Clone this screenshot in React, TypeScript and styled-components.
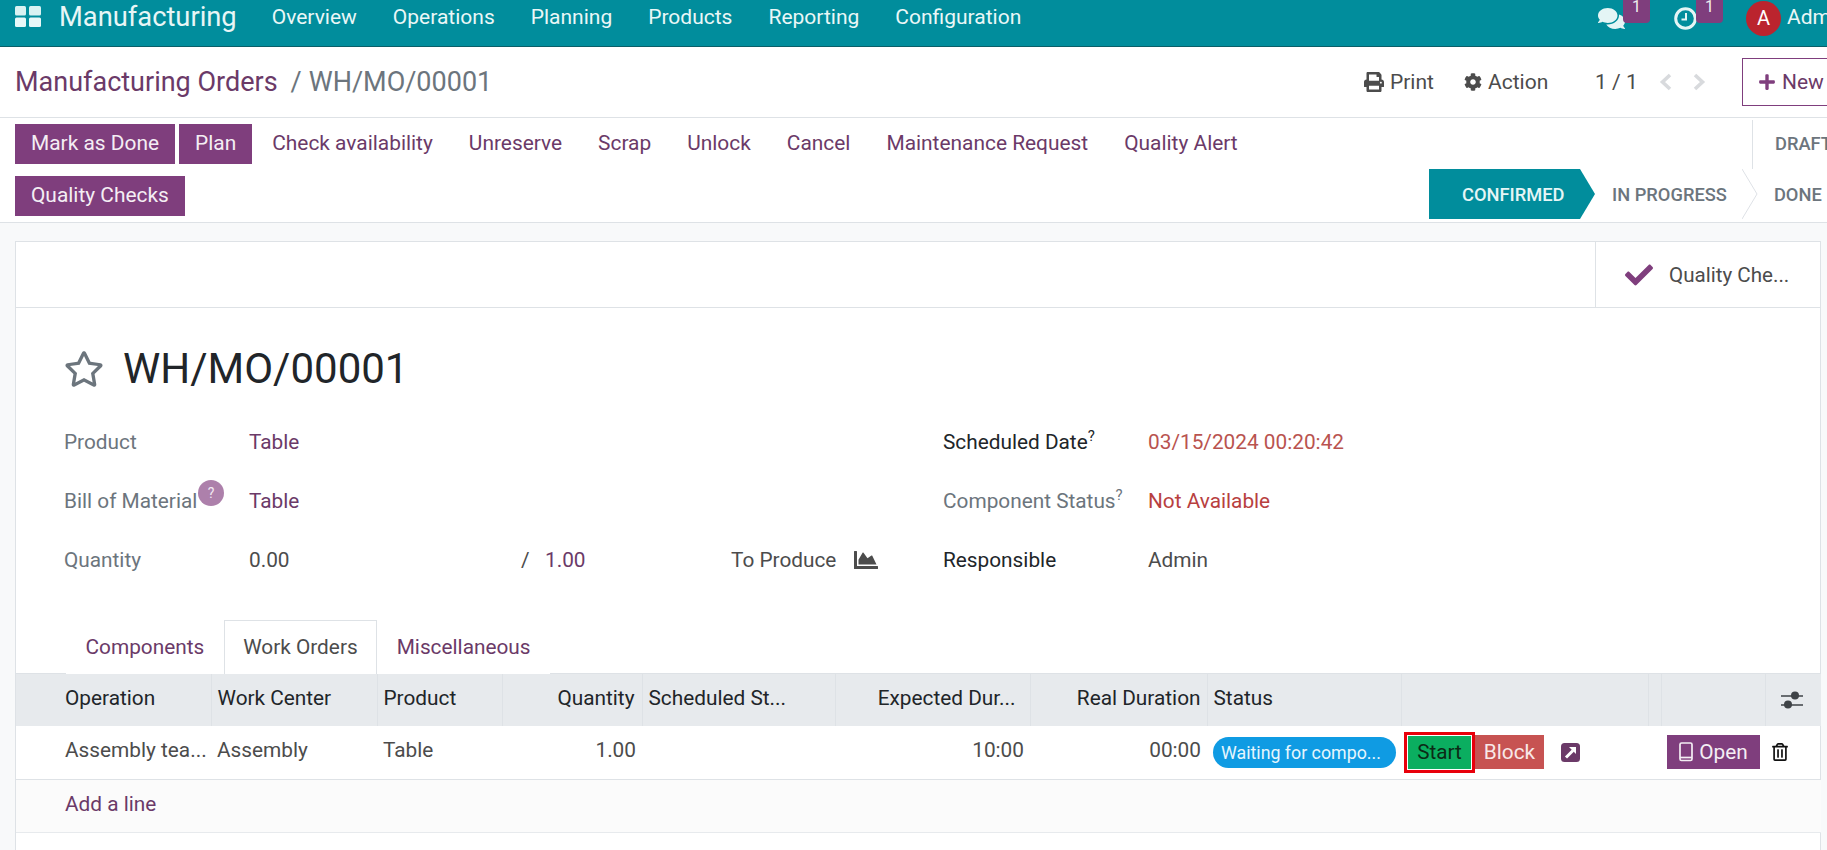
import React from "react";
import styled, { createGlobalStyle } from "styled-components";
import { FaComments, FaPrint, FaCog, FaPlus, FaCheck, FaRegStar, FaChartArea, FaRegTrashAlt } from "react-icons/fa";

const PURPLE = "#7f3e7d";
const LINK = "#6b3a68";
const TEAL = "#018d9c";
const BASE = "20.8px";

const Global = createGlobalStyle`
  html, body { margin: 0; padding: 0; height: 850px; overflow: hidden; background: #f8f9fa; }
  body { font-family: Roboto, "Liberation Sans", sans-serif; font-size: ${BASE}; color: #4c4c4c; }
  * { box-sizing: border-box; }
`;

const Page = styled.div`
  width: 1827px;
  height: 850px;
  overflow: hidden;
  display: flex;
  flex-direction: column;
`;

const Navbar = styled.header`
  height: 47px;
  flex: none;
  width: 1900px;
  background: ${TEAL};
  border-bottom: 1px solid #0a5f68;
  display: flex;
  align-items: center;
  color: #fff;
  padding-left: 15px;
`;
const AppGrid = styled.svg`
  width: 26px;
  height: 21px;
  margin: 0 18px 13px 0;
`;
const Brand = styled.span`
  font-size: 27.3px;
  color: #e8f6f6;
  margin-bottom: 12px;
  margin-right: 35px;
`;
const NavItem = styled.span`
  font-size: 21px;
  color: #eaf7f7;
  margin-right: 36px;
  margin-bottom: 12px;
`;
const NavRight = styled.div`
  margin-left: auto;
  display: flex;
  align-items: center;
  height: 100%;
  width: 302px;
`;
const IconSlot = styled.span<{ $w: number }>`
  position: relative;
  display: flex;
  align-items: center;
  width: ${(p) => p.$w}px;
  height: 100%;
  color: #e4f5f5;
  padding-bottom: 10px;
`;
const Badge = styled.span<{ $left: number }>`
  position: absolute;
  top: -4px;
  left: ${(p) => p.$left}px;
  width: 27px;
  height: 27px;
  border-radius: 4px;
  background: ${PURPLE};
  color: #eee;
  font-size: 16px;
  text-align: center;
  line-height: 21px;
`;
const ClockIcon = styled.svg`
  width: 23px;
  height: 23px;
`;
const Avatar = styled.span`
  width: 35px;
  height: 35px;
  border-radius: 50%;
  background: #bb242e;
  color: #fff;
  font-size: 20px;
  display: flex;
  align-items: center;
  justify-content: center;
  margin-right: 6px;
  margin-bottom: 10px;
`;
const UserName = styled.span`
  font-size: 21px;
  color: #eaf7f7;
  margin-bottom: 12px;
`;

const CrumbBar = styled.div`
  flex: none;
  height: 71px;
  width: 1900px;
  background: #fff;
  border-bottom: 1px solid #dee2e6;
  display: flex;
  align-items: center;
  padding: 0 38px 0 15px;
`;
const Crumb = styled.span`
  font-size: 27px;
  color: ${LINK};
`;
const CrumbSep = styled.span`
  font-size: 27px;
  color: #6c757d;
  margin: 0 7px 0 13px;
`;
const CrumbCurrent = styled.span`
  font-size: 27px;
  color: #6c757d;
`;
const CrumbActions = styled.div`
  margin-left: auto;
  display: flex;
  align-items: center;
  font-size: 21px;
  color: #4c4c4c;
`;
const ActionItem = styled.span<{ $w: number }>`
  display: flex;
  align-items: center;
  gap: 6px;
  width: ${(p) => p.$w}px;
`;
const Pager = styled.span`
  width: 64px;
  white-space: nowrap;
`;
const PagerArrow = styled.svg<{ $w: number }>`
  width: 13px;
  height: 18px;
  margin-right: ${(p) => p.$w - 13}px;
  flex: none;
`;
const NewButton = styled.span`
  display: flex;
  align-items: center;
  gap: 6px;
  height: 48px;
  width: 120px;
  padding-left: 15px;
  border: 1px solid ${PURPLE};
  color: ${LINK};
  svg { color: ${PURPLE}; }
`;

const ControlBar = styled.div`
  flex: none;
  height: 105px;
  background: #fff;
  border-bottom: 1px solid #dee2e6;
  display: flex;
  justify-content: space-between;
  overflow: hidden;
`;
const Buttons = styled.div`
  padding: 6px 0 0 15px;
  display: flex;
  flex-direction: column;
  gap: 12px;
`;
const ButtonRow = styled.div`
  display: flex;
  gap: 4px;
`;
const ActionButton = styled.span<{ $primary?: boolean }>`
  height: 40px;
  padding: 0 16px 2px;
  display: flex;
  align-items: center;
  font-size: 20.9px;
  white-space: nowrap;
  background: ${(p) => (p.$primary ? PURPLE : "transparent")};
  color: ${(p) => (p.$primary ? "#f4eef4" : LINK)};
`;
const StatusBar = styled.div`
  width: 398px;
  flex: none;
  display: flex;
  flex-direction: column;
  font-size: 18.3px;
  font-weight: 500;
  color: #6c757d;
`;
const DraftRow = styled.div`
  margin: 2px 0 0 323px;
  height: 49px;
  border-left: 1px solid #dee2e6;
  padding: 13px 0 0 22px;
  white-space: nowrap;
`;
const Steps = styled.div`
  display: flex;
  height: 50px;
  align-items: center;
`;
const CurrentStep = styled.span`
  background: ${TEAL};
  color: #e6f6f6;
  width: 151px;
  height: 50px;
  padding-left: 33px;
  display: flex;
  align-items: center;
`;
const Arrow = styled.svg<{ $ml?: number }>`
  width: 16px;
  height: 50px;
  flex: none;
  margin-left: ${(p) => p.$ml ?? 0}px;
`;
const Step = styled.span<{ $ml: number }>`
  margin-left: ${(p) => p.$ml}px;
  white-space: nowrap;
`;

const Sheet = styled.main`
  margin: 18px 6px 0 15px;
  flex: 1;
  background: #fff;
  border: 1px solid #dee2e6;
  border-bottom: none;
`;
const ButtonBox = styled.div`
  height: 66px;
  border-bottom: 1px solid #dee2e6;
  display: flex;
  justify-content: flex-end;
`;
const StatButton = styled.div`
  width: 225px;
  border-left: 1px solid #dee2e6;
  display: flex;
  align-items: center;
  padding-left: 29px;
  gap: 16px;
  font-size: 20.6px;
  color: #4c4c4c;
  svg { color: ${PURPLE}; }
`;
const TitleRow = styled.div`
  display: flex;
  align-items: center;
  height: 65px;
  margin: 28px 0 0 48px;
  gap: 19px;
  color: #6c757d;
`;
const Title = styled.h1`
  margin: 0;
  font-size: 42px;
  font-weight: 400;
  color: #212529;
`;
const Form = styled.div`
  margin: 11px 0 0 48px;
  display: grid;
  grid-template-columns: 879px 1fr;
`;
const FormColumn = styled.div`
  display: flex;
  flex-direction: column;
`;
const FormRow = styled.div`
  height: 59px;
  display: flex;
  align-items: center;
`;
const Label = styled.span<{ $w: number; $dark?: boolean }>`
  width: ${(p) => p.$w}px;
  flex: none;
  color: ${(p) => (p.$dark ? "#212529" : "#6c757d")};
  position: relative;
`;
const Sup = styled.sup`
  font-size: 15px;
  line-height: 0;
`;
const Help = styled.span`
  position: absolute;
  left: 134px;
  top: -9px;
  width: 26px;
  height: 26px;
  border-radius: 50%;
  background: #ad80ab;
  color: #f3e9f3;
  font-size: 14px;
  display: flex;
  align-items: center;
  justify-content: center;
`;
const Value = styled.span<{ $color?: string; $w?: number }>`
  color: ${(p) => p.$color ?? "#4c4c4c"};
  ${(p) => (p.$w ? `width: ${p.$w}px;` : "")}
`;
const Unit = styled.span`
  color: #4c4c4c;
  width: 147px;
  display: flex;
  justify-content: space-between;
  align-items: center;
`;

const Tabs = styled.div`
  margin-top: 31px;
  padding-left: 50px;
  display: flex;
  height: 54px;
  border-bottom: 1px solid #dee2e6;
`;
const Tab = styled.span<{ $active?: boolean }>`
  height: 54px;
  padding: 0 18.5px 2px;
  display: flex;
  align-items: center;
  color: ${(p) => (p.$active ? "#4c4c4c" : LINK)};
  background: #fff;
  border: 1px solid ${(p) => (p.$active ? "#dee2e6" : "transparent")};
  border-bottom: none;
`;
const Table = styled.table`
  width: 1805px;
  table-layout: fixed;
  border-collapse: collapse;
`;
const Th = styled.th<{ $right?: boolean; $pr?: number }>`
  height: 52px;
  background: #e7eaed;
  font-weight: 400;
  font-size: ${BASE};
  color: #212529;
  padding: 0 ${(p) => p.$pr ?? 6}px 4px 6px;
  text-align: ${(p) => (p.$right ? "right" : "left")};
  border-left: 1px solid #dee2e6;
  white-space: nowrap;
  overflow: hidden;
  &:first-child { border-left: none; padding-left: 49px; }
`;
const Td = styled.td<{ $right?: boolean }>`
  height: 53px;
  color: #4c4c4c;
  padding: 0 6px 4px;
  text-align: ${(p) => (p.$right ? "right" : "left")};
  border-bottom: 1px solid #dee2e6;
  white-space: nowrap;
  &:first-child { padding-left: 49px; }
`;
const ActionCell = styled(Td)`
  padding-bottom: 0;
`;
const AddRow = styled.td`
  height: 53px;
  background: #fbfbfb;
  border-bottom: 1px solid #e7eaed;
  padding: 0 0 3px 49px;
  color: ${LINK};
`;
const Pill = styled.span`
  display: block;
  width: 183px;
  height: 31px;
  line-height: 31px;
  border-radius: 16px;
  background: #0f9be3;
  color: #e6f6fd;
  font-size: 17.8px;
  padding-left: 8px;
`;
const RowActions = styled.div`
  display: flex;
  align-items: center;
  margin-left: -3px;
`;
const Start = styled.span`
  width: 71px;
  height: 41px;
  border: 3px solid #e8000b;
  padding: 1px;
  background: #fff;
  display: flex;
  z-index: 1;
  span {
    flex: 1;
    background: #0bae60;
    color: #0c2a16;
    font-size: 20.7px;
    display: flex;
    align-items: center;
    justify-content: center;
  }
`;
const Block = styled.span`
  width: 69px;
  height: 34px;
  background: #c75352;
  color: #f8e8e8;
  display: flex;
  align-items: center;
  justify-content: center;
`;
const LinkIcon = styled.svg`
  width: 19px;
  height: 19px;
  margin-left: 17px;
`;
const OpenButton = styled.span`
  width: 93px;
  height: 34px;
  background: ${PURPLE};
  color: #f4eef4;
  display: flex;
  align-items: center;
  justify-content: center;
  gap: 6px;
`;
const SliderIcon = styled.svg`
  width: 22px;
  height: 18px;
  display: block;
  margin: 4px 0 0 9px;
`;
const Trash = styled.span`
  display: flex;
  color: #111;
`;

const cols = [195, 166, 125, 140, 193, 195, 177, 194, 247, 13, 104, 56];

export default function App() {
  return (
    <Page>
      <Global />
      <Navbar>
        <AppGrid viewBox="0 0 26 21">
          <rect x="0" y="0" width="11" height="9.5" rx="1.5" fill="#d9f2f2" />
          <rect x="14" y="0" width="12" height="9.5" rx="1.5" fill="#d9f2f2" />
          <rect x="0" y="11.5" width="11" height="9.5" rx="1.5" fill="#e8f8f8" />
          <rect x="14" y="11.5" width="12" height="9.5" rx="1.5" fill="#e8f8f8" />
        </AppGrid>
        <Brand>Manufacturing</Brand>
        {["Overview", "Operations", "Planning", "Products", "Reporting", "Configuration"].map((n) => (
          <NavItem key={n}>{n}</NavItem>
        ))}
        <NavRight>
          <IconSlot $w={76}>
            <FaComments size={27} />
            <Badge $left={25}>1</Badge>
          </IconSlot>
          <IconSlot $w={72}>
            <ClockIcon viewBox="0 0 23 23">
              <circle cx="11.5" cy="11.5" r="9.8" fill="none" stroke="#e4f5f5" strokeWidth="3" />
              <path d="M12 6v6.4H7.5" fill="none" stroke="#e4f5f5" strokeWidth="2" />
            </ClockIcon>
            <Badge $left={22}>1</Badge>
          </IconSlot>
          <Avatar>A</Avatar>
          <UserName>Admin</UserName>
        </NavRight>
      </Navbar>

      <CrumbBar>
        <Crumb>Manufacturing Orders</Crumb>
        <CrumbSep>/</CrumbSep>
        <CrumbCurrent>WH/MO/00001</CrumbCurrent>
        <CrumbActions>
          <ActionItem $w={100}><FaPrint size={20} />Print</ActionItem>
          <ActionItem $w={131}><FaCog size={18} />Action</ActionItem>
          <Pager>1 / 1</Pager>
          <PagerArrow $w={34} viewBox="0 0 13 18">
            <path d="M11 2L3.5 9l7.5 7" fill="none" stroke="#d8dadd" strokeWidth="3.6" />
          </PagerArrow>
          <PagerArrow $w={49} viewBox="0 0 13 18">
            <path d="M2 2l7.5 7L2 16" fill="none" stroke="#d8dadd" strokeWidth="3.6" />
          </PagerArrow>
          <NewButton><FaPlus size={18} />New</NewButton>
        </CrumbActions>
      </CrumbBar>

      <ControlBar>
        <Buttons>
          <ButtonRow>
            <ActionButton $primary>Mark as Done</ActionButton>
            <ActionButton $primary>Plan</ActionButton>
            <ActionButton>Check availability</ActionButton>
            <ActionButton>Unreserve</ActionButton>
            <ActionButton>Scrap</ActionButton>
            <ActionButton>Unlock</ActionButton>
            <ActionButton>Cancel</ActionButton>
            <ActionButton>Maintenance Request</ActionButton>
            <ActionButton>Quality Alert</ActionButton>
          </ButtonRow>
          <ButtonRow>
            <ActionButton $primary>Quality Checks</ActionButton>
          </ButtonRow>
        </Buttons>
        <StatusBar>
          <DraftRow>DRAFT</DraftRow>
          <Steps>
            <CurrentStep>CONFIRMED</CurrentStep>
            <Arrow viewBox="0 0 16 50">
              <path d="M0 0 L15 25 L0 50 Z" fill={TEAL} />
            </Arrow>
            <Step $ml={16}>IN PROGRESS</Step>
            <Arrow viewBox="0 0 16 50" $ml={15}>
              <path d="M0 0 L15 25 L0 50" fill="none" stroke="#dee2e6" />
            </Arrow>
            <Step $ml={16}>DONE</Step>
          </Steps>
        </StatusBar>
      </ControlBar>

      <Sheet>
        <ButtonBox>
          <StatButton>
            <FaCheck size={28} />
            Quality Che...
          </StatButton>
        </ButtonBox>
        <TitleRow>
          <FaRegStar size={40} />
          <Title>WH/MO/00001</Title>
        </TitleRow>
        <Form>
          <FormColumn>
            <FormRow>
              <Label $w={185}>Product</Label>
              <Value $color={LINK}>Table</Value>
            </FormRow>
            <FormRow>
              <Label $w={185}>Bill of Material<Help>?</Help></Label>
              <Value $color={LINK}>Table</Value>
            </FormRow>
            <FormRow>
              <Label $w={185}>Quantity</Label>
              <Value $w={272}>0.00</Value>
              <Value $w={24}>/</Value>
              <Value $w={186} $color={LINK}>1.00</Value>
              <Unit>To Produce <FaChartArea size={24} /></Unit>
            </FormRow>
          </FormColumn>
          <FormColumn>
            <FormRow>
              <Label $w={205} $dark>Scheduled Date<Sup>?</Sup></Label>
              <Value $color="#b9534f">03/15/2024 00:20:42</Value>
            </FormRow>
            <FormRow>
              <Label $w={205}>Component Status<Sup>?</Sup></Label>
              <Value $color="#b8403f">Not Available</Value>
            </FormRow>
            <FormRow>
              <Label $w={205} $dark>Responsible</Label>
              <Value>Admin</Value>
            </FormRow>
          </FormColumn>
        </Form>
        <Tabs>
          <Tab>Components</Tab>
          <Tab $active>Work Orders</Tab>
          <Tab>Miscellaneous</Tab>
        </Tabs>
        <Table>
          <colgroup>
            {cols.map((w, i) => (
              <col key={i} style={{ width: w }} />
            ))}
          </colgroup>
          <thead>
            <tr>
              <Th>Operation</Th>
              <Th>Work Center</Th>
              <Th>Product</Th>
              <Th $right $pr={7}>Quantity</Th>
              <Th>Scheduled St...</Th>
              <Th $right $pr={14}>Expected Dur...</Th>
              <Th $right>Real Duration</Th>
              <Th>Status</Th>
              <Th />
              <Th />
              <Th />
              <Th>
                <SliderIcon viewBox="0 0 22 18">
                  <path d="M0 5h22M0 14h22" stroke="#3f4347" strokeWidth="1.6" />
                  <circle cx="14" cy="4.5" r="4" fill="#3f4347" />
                  <circle cx="7" cy="13.5" r="4" fill="#3f4347" />
                </SliderIcon>
              </Th>
            </tr>
          </thead>
          <tbody>
            <tr>
              <Td>Assembly tea...</Td>
              <Td>Assembly</Td>
              <Td>Table</Td>
              <Td $right>1.00</Td>
              <Td />
              <Td $right>10:00</Td>
              <Td $right>00:00</Td>
              <ActionCell><Pill>Waiting for compo...</Pill></ActionCell>
              <ActionCell>
                <RowActions>
                  <Start><span>Start</span></Start>
                  <Block>Block</Block>
                  <LinkIcon viewBox="0 0 19 19">
                    <rect width="19" height="19" rx="3.5" fill={LINK} />
                    <path d="M5 14.5 L12 7.5" stroke="#fff" strokeWidth="3" />
                    <path d="M8 4 H15 V11 Z" fill="#fff" />
                  </LinkIcon>
                </RowActions>
              </ActionCell>
              <Td />
              <ActionCell>
                <OpenButton>
                  <svg width="14" height="20" viewBox="0 0 14 20">
                    <rect x="1" y="1" width="12" height="17.5" rx="1.5" fill="none" stroke="#f4eef4" strokeWidth="1.7" />
                    <path d="M1 15.5h12" stroke="#f4eef4" strokeWidth="1.7" />
                  </svg>
                  Open
                </OpenButton>
              </ActionCell>
              <ActionCell><Trash><FaRegTrashAlt size={18} /></Trash></ActionCell>
            </tr>
            <tr>
              <AddRow colSpan={12}>Add a line</AddRow>
            </tr>
          </tbody>
        </Table>
      </Sheet>
    </Page>
  );
}
